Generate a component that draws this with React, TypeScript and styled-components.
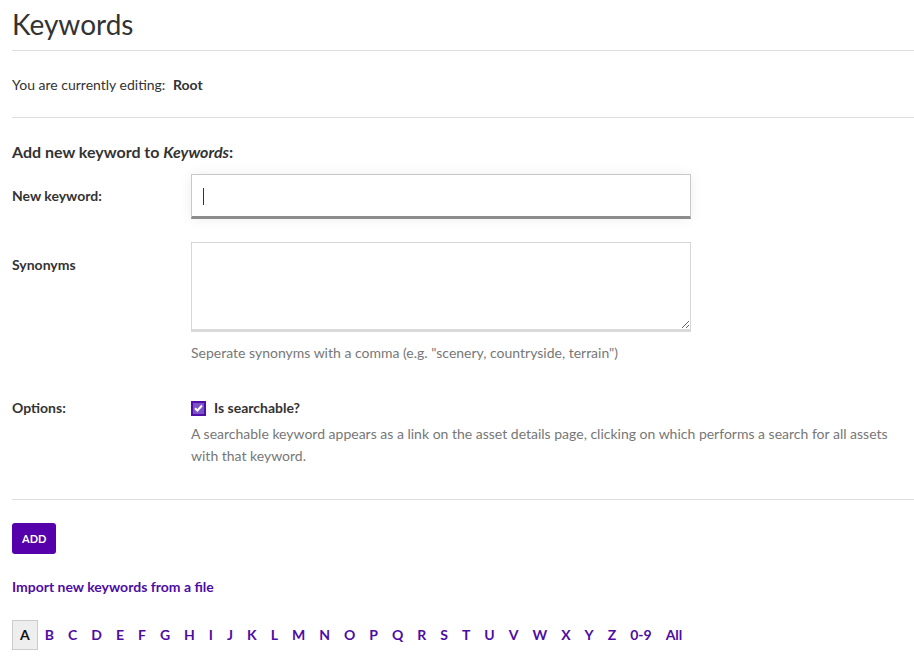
import React from "react"
import styled, { createGlobalStyle } from "styled-components"

const GlobalStyle = createGlobalStyle`
  html, body {
    margin: 0;
    padding: 0;
    background: #fff;
  }
  body {
    font-family: Lato, "Noto Sans", "Liberation Sans", sans-serif;
    font-size: 14px;
    color: #333;
  }
`

const Page = styled.div`
  padding: 0 0 0 12px;
`

const Title = styled.h1`
  margin: 0;
  padding: 7px 0 9px;
  font-size: 28px;
  line-height: 34px;
  font-weight: 400;
  color: #333;
  border-bottom: 1px solid #ddd;
`

const Editing = styled.p`
  margin: 0;
  padding: 24px 0 22px;
  line-height: 20px;
  border-bottom: 1px solid #ddd;

  strong {
    font-weight: 700;
    margin-left: 4px;
  }
`

const SectionTitle = styled.h2`
  margin: 23px 0 11px;
  font-size: 16px;
  line-height: 22px;
  font-weight: 700;

  em {
    font-style: italic;
  }
`

const FormRow = styled.div<{ $top?: number }>`
  display: grid;
  grid-template-columns: 179px 1fr;
  align-items: start;
  margin-top: ${(p) => p.$top ?? 0}px;
  padding-right: 20px;
`

const Label = styled.label<{ $pad?: number }>`
  font-weight: 700;
  line-height: 20px;
  padding-top: ${(p) => p.$pad ?? 0}px;
`

const InputWrap = styled.div`
  position: relative;
  width: 500px;
`

const TextInput = styled.input`
  box-sizing: border-box;
  width: 500px;
  height: 45px;
  border: 1px solid #c8c8c8;
  border-bottom: 3px solid #8c8c8c;
  box-shadow: 0 0 12px rgba(0, 0, 0, 0.07);
  padding: 0 11px;
  font: inherit;
  outline: none;
  caret-color: transparent;
`

const Caret = styled.span`
  position: absolute;
  left: 12px;
  top: 14px;
  width: 1px;
  height: 17px;
  background: #333;
`

const TextArea = styled.textarea`
  display: block;
  box-sizing: border-box;
  width: 500px;
  height: 90px;
  border: 1px solid #d6d6d6;
  border-bottom: 3px solid #dadada;
  padding: 8px 11px;
  font: inherit;
  outline: none;
  resize: vertical;
`

const Help = styled.div<{ $top?: number }>`
  color: #777;
  line-height: ${(p) => (p.$top ? 22 : 20)}px;
  margin-top: ${(p) => p.$top ?? 11}px;
`

const CheckLine = styled.div`
  display: flex;
  align-items: center;
  gap: 8px;
  line-height: 20px;
  font-weight: 700;
`

const CheckBox = styled.span`
  box-sizing: border-box;
  width: 15px;
  height: 15px;
  background: #7c53c6;
  border: 2px solid #4f0fa8;
  display: inline-flex;
  align-items: center;
  justify-content: center;
`

const Divider = styled.div`
  border-top: 1px solid #ddd;
  margin-top: 32px;
`

const Button = styled.button`
  margin-top: 23px;
  height: 31px;
  padding: 0 10px;
  border: none;
  border-radius: 3px;
  background: #5500aa;
  color: #fff;
  font: inherit;
  font-size: 11px;
  font-weight: 700;
  cursor: pointer;
`

const ImportLink = styled.a`
  display: block;
  margin-top: 23px;
  line-height: 20px;
  color: #4e0ca3;
  text-decoration: none;
  font-weight: 700;
`

const Letters = styled.div`
  display: flex;
  margin-top: 23px;
`

const Letter = styled.a<{ $active?: boolean }>`
  box-sizing: border-box;
  height: 30px;
  padding: 0 ${(p) => (p.$active ? 7 : 6)}px;
  display: flex;
  align-items: center;
  line-height: 20px;
  color: ${(p) => (p.$active ? "#111" : "#4e0ca3")};
  background: ${(p) => (p.$active ? "#eee" : "transparent")};
  border: 1px solid ${(p) => (p.$active ? "#ccc" : "transparent")};
  text-decoration: none;
  font-weight: 700;
`

const alphabet = "ABCDEFGHIJKLMNOPQRSTUVWXYZ".split("").concat(["0-9", "All"])

export default function App() {
  return (
    <Page>
      <GlobalStyle />
      <Title>Keywords</Title>
      <Editing>
        You are currently editing: <strong>Root</strong>
      </Editing>

      <SectionTitle>
        Add new keyword to <em>Keywords</em>:
      </SectionTitle>

      <FormRow>
        <Label $pad={12}>New keyword:</Label>
        <InputWrap>
          <TextInput type="text" />
          <Caret />
        </InputWrap>
      </FormRow>

      <FormRow $top={23}>
        <Label $pad={13}>Synonyms</Label>
        <div>
          <TextArea />
          <Help>Seperate synonyms with a comma (e.g. "scenery, countryside, terrain")</Help>
        </div>
      </FormRow>

      <FormRow $top={35}>
        <Label>Options:</Label>
        <div>
          <CheckLine>
            <CheckBox>
              <svg width="9" height="8" viewBox="0 0 9 8">
                <path d="M1 4.2 L3.4 6.5 L8 1.5" stroke="#fff" strokeWidth="2" fill="none" />
              </svg>
            </CheckBox>
            Is searchable?
          </CheckLine>
          <Help $top={5}>
            A searchable keyword appears as a link on the asset details page, clicking on which performs a search for
            all assets with that keyword.
          </Help>
        </div>
      </FormRow>

      <Divider />
      <Button>ADD</Button>
      <ImportLink href="#">Import new keywords from a file</ImportLink>

      <Letters>
        {alphabet.map((l) => (
          <Letter key={l} href="#" $active={l === "A"}>
            {l}
          </Letter>
        ))}
      </Letters>
    </Page>
  )
}
